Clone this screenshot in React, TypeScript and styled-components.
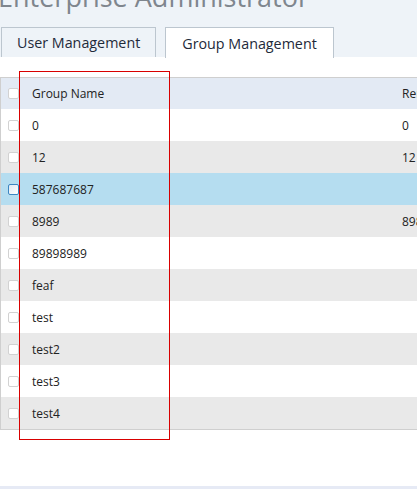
import styled, { createGlobalStyle } from "styled-components";

const GlobalStyle = createGlobalStyle`
  html, body {
    margin: 0;
    padding: 0;
    background: #ffffff;
    overflow: hidden;
  }
  body {
    font-family: "Open Sans", "Noto Sans", sans-serif;
    color: #222;
  }
`;

const Page = styled.div`
  position: relative;
  width: 417px;
  height: 489px;
  overflow: hidden;
  display: flex;
  flex-direction: column;
`;

const Header = styled.div`
  background: #eef3f8;
  height: 57px;
  display: flex;
  flex-direction: column;
  justify-content: flex-end;
`;

const Title = styled.h1`
  margin: 0 0 0 -2px;
  height: 30px;
  flex-shrink: 0;
  font-family: "Open Sans", sans-serif;
  font-weight: 400;
  font-size: 27px;
  line-height: 2px;
  color: #7f868e;
  white-space: nowrap;
`;

const Tabs = styled.div`
  display: flex;
  flex-shrink: 0;
  align-items: flex-end;
  gap: 9px;
  padding-left: 1px;
  height: 31px;
`;

const Tab = styled.div<{ active?: boolean }>`
  box-sizing: border-box;
  height: ${(p) => (p.active ? "31px" : "30px")};
  margin-bottom: ${(p) => (p.active ? "-1px" : "0")};
  padding: 0 ${(p) => (p.active ? "16px" : "15px")};
  display: flex;
  align-items: center;
  font-size: 14.3px;
  color: #1e2a3a;
  background: ${(p) => (p.active ? "#ffffff" : "#eef3f8")};
  border: 1px solid #bcc6cf;
  border-bottom: none;
`;

const Body = styled.div`
  flex: 1;
  padding-top: 20px;
  display: flex;
  flex-direction: column;
`;

const TableWrap = styled.div`
  overflow: hidden;
  border-top: 1px solid #cfcfcf;
  border-bottom: 1px solid #cfcfcf;
  border-left: 1px solid #cfcfcf;
`;

const Table = styled.table`
  border-collapse: collapse;
  width: 460px;
  table-layout: fixed;
  font-size: 12px;
`;

const Row = styled.tr<{ tone: "head" | "white" | "gray" | "selected" }>`
  height: ${(p) => (p.tone === "head" ? "31px" : "32px")};
  background: ${(p) =>
    p.tone === "head"
      ? "#e3eaf4"
      : p.tone === "gray"
      ? "#e9e9e9"
      : p.tone === "selected"
      ? "#b5ddf0"
      : "#ffffff"};
`;

const Cell = styled.td`
  padding: 0 0 0 7px;
  white-space: nowrap;
  overflow: hidden;
  vertical-align: middle;
`;

const HeadCell = styled(Cell).attrs({ as: "th" })`
  font-weight: 400;
  text-align: left;
`;

const Check = styled.span<{ selected?: boolean }>`
  display: block;
  box-sizing: border-box;
  width: 11px;
  height: 11px;
  border-radius: 2px;
  border: 1px solid ${(p) => (p.selected ? "#3c86c2" : "#d2d2d2")};
  background: ${(p) => (p.selected ? "linear-gradient(135deg, #dfe8f2, #ffffff)" : "#ffffff")};
`;

const BottomBand = styled.div`
  margin-top: auto;
  height: 3px;
  background: #e6eaf5;
`;

const Annotation = styled.div`
  position: absolute;
  left: 19px;
  top: 71px;
  width: 151px;
  height: 369px;
  box-sizing: border-box;
  border: 1px solid #d80000;
  pointer-events: none;
`;

const rows = [
  { name: "0", rest: "0" },
  { name: "12", rest: "12" },
  { name: "587687687", rest: "" },
  { name: "8989", rest: "8989" },
  { name: "89898989", rest: "" },
  { name: "feaf", rest: "" },
  { name: "test", rest: "" },
  { name: "test2", rest: "" },
  { name: "test3", rest: "" },
  { name: "test4", rest: "" },
];

export default function App() {
  return (
    <>
      <GlobalStyle />
      <Page>
        <Header>
          <Title>Enterprise Administrator</Title>
          <Tabs>
            <Tab>User Management</Tab>
            <Tab active>Group Management</Tab>
          </Tabs>
        </Header>
        <Body>
          <TableWrap>
            <Table>
              <colgroup>
                <col style={{ width: 24 }} />
                <col style={{ width: 370 }} />
                <col />
              </colgroup>
              <thead>
                <Row tone="head">
                  <HeadCell>
                    <Check />
                  </HeadCell>
                  <HeadCell>Group Name</HeadCell>
                  <HeadCell>Remark</HeadCell>
                </Row>
              </thead>
              <tbody>
                {rows.map((r, i) => {
                  const selected = i === 2;
                  const tone = selected ? "selected" : i % 2 === 1 ? "gray" : "white";
                  return (
                    <Row key={r.name} tone={tone}>
                      <Cell>
                        <Check selected={selected} />
                      </Cell>
                      <Cell>{r.name}</Cell>
                      <Cell>{r.rest}</Cell>
                    </Row>
                  );
                })}
              </tbody>
            </Table>
          </TableWrap>
          <BottomBand />
        </Body>
        <Annotation />
      </Page>
    </>
  );
}
